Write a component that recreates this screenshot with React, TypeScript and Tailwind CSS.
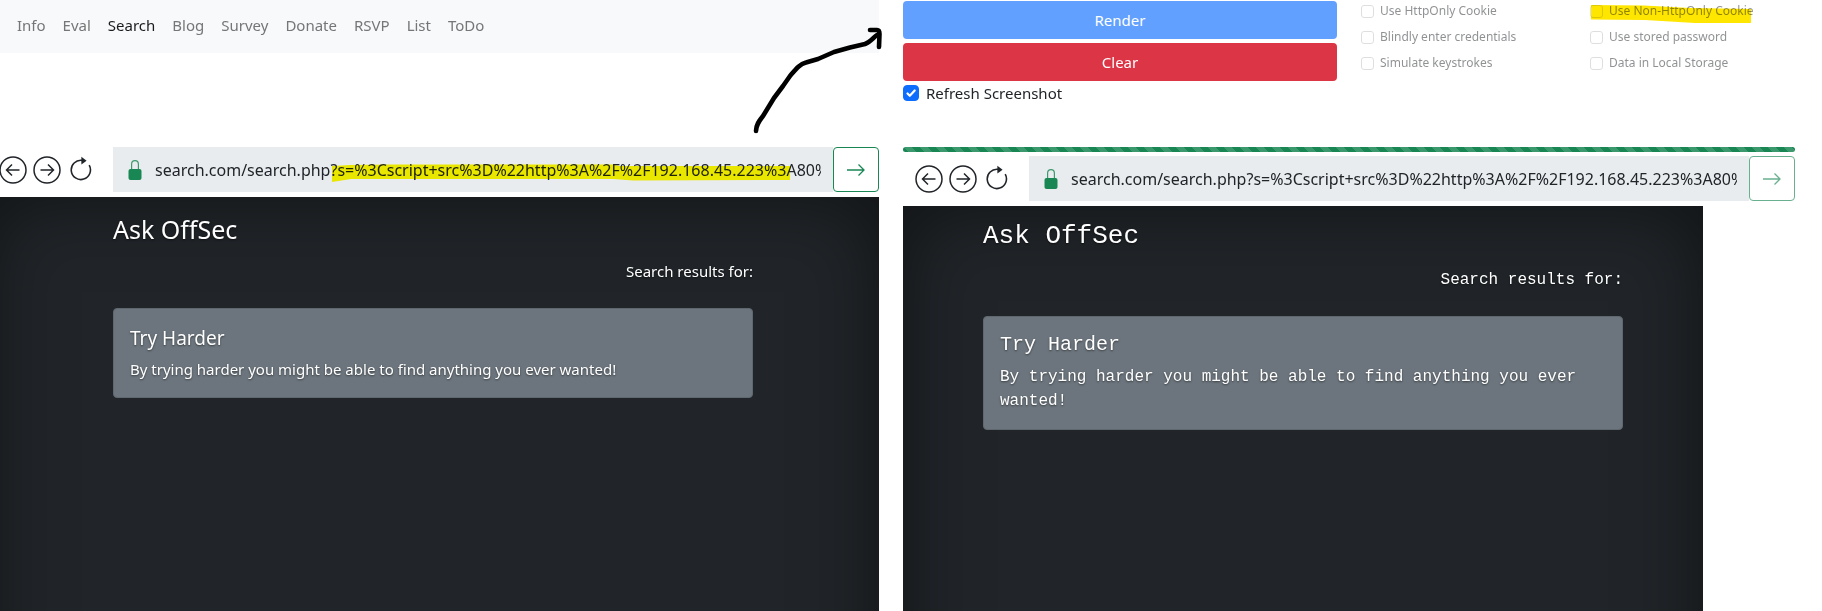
import React from "react";

const url =
  "search.com/search.php?s=%3Cscript+src%3D%22http%3A%2F%2F192.168.45.223%3A80%";

const navItems = ["Info", "Eval", "Search", "Blog", "Survey", "Donate", "RSVP", "List", "ToDo"];

const leftOptions = ["Use HttpOnly Cookie", "Blindly enter credentials", "Simulate keystrokes"];
const rightOptions = ["Use Non-HttpOnly Cookie", "Use stored password", "Data in Local Storage"];

function CircleArrow({ back }: { back?: boolean }) {
  return (
    <svg width="28" height="28" viewBox="0 0 28 28" fill="none" stroke="#212529" strokeWidth="1.5">
      <circle cx="14" cy="14" r="13" />
      {back ? <path d="M20.5 14H8M13 8.5L7.5 14l5.5 5.5" /> : <path d="M7.5 14H20M15 8.5l5.5 5.5-5.5 5.5" />}
    </svg>
  );
}

function ReloadIcon() {
  return (
    <svg width="22" height="28" viewBox="0 0 22 28" fill="none">
      <path d="M12 4.4A9.6 9.6 0 1 0 19.2 9.2" stroke="#212529" strokeWidth="1.6" />
      <path d="M11.4 0.800v7.800L16.600 4.800z" fill="#212529" />
    </svg>
  );
}

function LockIcon() {
  return (
    <svg width="14" height="22" viewBox="0 0 14 22" fill="none">
      <path d="M3.6 11V5.2a3.4 3.6 0 0 1 6.8 0V11" stroke="#3d9a6f" strokeWidth="1.2" />
      <rect x="0.5" y="10" width="13" height="11" rx="2" fill="#198754" />
    </svg>
  );
}

function AddressBar({ id, busy, children }: { id: string; busy?: boolean; children?: React.ReactNode }) {
  return (
    <div className="flex h-[45px] shrink-0">
      <div className="flex w-[126px] shrink-0 items-center gap-[6px] pl-3">
        <button type="button" aria-label="Back">
          <CircleArrow back />
        </button>
        <button type="button" aria-label="Forward">
          <CircleArrow />
        </button>
        <button type="button" aria-label="Reload" className="ml-[3px]">
          <ReloadIcon />
        </button>
      </div>
      <div className="relative flex min-w-0 flex-1 items-center bg-[#e9ecef] pl-[15px]">
        <LockIcon />
        <label htmlFor={id} className="sr-only">
          Address
        </label>
        <div className="min-w-0 flex-1 pr-3 pl-[13px]">
          <input
            id={id}
            type="text"
            readOnly
            defaultValue={url}
            className="block h-6 w-full bg-transparent text-base leading-6 text-[#212529] outline-none"
          />
        </div>
        {children}
      </div>
      <button
        type="button"
        aria-label="Go"
        disabled={busy}
        className="flex w-[46px] shrink-0 items-center justify-center rounded border border-[#198754] bg-white disabled:opacity-65"
      >
        <svg width="18" height="14" viewBox="0 0 18 14" fill="none" stroke="#198754" strokeWidth="1.3">
          <path d="M0 7h17M11.5 1.5L17 7l-5.500 5.500" />
        </svg>
      </button>
    </div>
  );
}

function Results({ mono }: { mono?: boolean }) {
  return (
    <section
      className={
        mono
          ? "mt-[5px] min-h-screen w-[800px] max-w-full shrink-0 bg-[#212529] pt-[14px] font-['Liberation_Mono',monospace] text-base leading-6 text-white shadow-[inset_0_0_80px_rgba(0,0,0,0.5)] [text-shadow:0_1px_2px_rgba(0,0,0,0.5)]"
          : "mt-[5px] min-h-screen shrink-0 bg-[#212529] pt-4 text-[15px] leading-6 text-white shadow-[inset_0_0_80px_rgba(0,0,0,0.5)] [text-shadow:0_1px_2px_rgba(0,0,0,0.5)]"
      }
    >
      <div className="mx-auto w-[640px] max-w-full">
        <h1 className={mono ? "text-[26px] leading-8" : "text-[25px] leading-8"}>Ask OffSec</h1>
        <p className={mono ? "mt-4 text-right" : "mt-[14px] text-right"}>Search results for:</p>
        <div className={mono ? "mt-6 rounded border border-[#5f676f] bg-[#6c757d] p-4" : "mt-[25px] rounded border border-[#5f676f] bg-[#6c757d] p-4"}>
          <h2 className={mono ? "mb-2 text-xl leading-6" : "mb-[6px] text-[19px] leading-[26px]"}>Try Harder</h2>
          <p>By trying harder you might be able to find anything you ever wanted!</p>
        </div>
      </div>
    </section>
  );
}

function OptionColumn({ options }: { options: string[] }) {
  return (
    <div className="flex flex-col gap-[6px]">
      {options.map((text) => (
        <label key={text} className="flex items-center gap-[6px] text-[12px] leading-5 text-[#212529] opacity-50">
          <input
            type="checkbox"
            disabled
            className="size-[13px] appearance-none rounded-[3px] border border-[#bfbfbf] bg-white"
          />
          {text}
        </label>
      ))}
    </div>
  );
}

export default function App() {
  return (
    <div className="relative h-screen overflow-hidden bg-white font-['Noto_Sans',sans-serif] text-[15px] text-[#212529]">
      <div className="-ml-[13px] grid h-full grid-cols-2 gap-6 pr-[27px]">
        <div className="flex min-w-0 flex-col">
          <nav className="mb-[94px] flex h-[53px] shrink-0 items-start gap-[17px] bg-[#f8f9fa] pt-[13px] pl-[30px]">
            {navItems.map((item) => (
              <a
                key={item}
                href="#"
                className={item === "Search" ? "leading-6 text-[#1a1b1c]" : "leading-6 text-[#757677]"}
              >
                {item}
              </a>
            ))}
          </nav>
          <AddressBar id="address-left">
            <svg
              className="pointer-events-none absolute top-[17px] left-[218px] mix-blend-multiply"
              width="460"
              height="19"
              viewBox="0 0 460 19"
            >
              <path
                d="M1 2L20 1L60 0.500L282 0.500L288 2L459 2L459 16L302 16.500L282 15L20 15L1 18Z"
                fill="#fff900"
              />
            </svg>
          </AddressBar>
          <Results />
        </div>

        <div className="flex min-w-0 flex-col">
          <div className="mb-[46px] grid shrink-0 grid-cols-2 gap-6 pt-px">
            <div className="flex flex-col gap-1">
              <button
                type="button"
                disabled
                className="h-[38px] rounded bg-[#0d6efd] text-white disabled:opacity-65"
              >
                Render
              </button>
              <button type="button" className="h-[38px] rounded bg-[#dc3545] text-white">
                Clear
              </button>
              <label className="flex h-4 items-center gap-[7px]">
                <span className="relative size-4">
                  <input
                    type="checkbox"
                    defaultChecked
                    className="peer block size-4 appearance-none rounded border border-[#bfbfbf] checked:border-[#0d6efd] checked:bg-[#0d6efd]"
                  />
                  <svg
                    className="pointer-events-none absolute inset-0 hidden peer-checked:block"
                    width="16"
                    height="16"
                    viewBox="0 0 16 16"
                    fill="none"
                  >
                    <path d="M4.500 8.500l2.300 2.300L11.700 5.500" stroke="#fff" strokeWidth="2.200" strokeLinecap="round" strokeLinejoin="round" />
                  </svg>
                </span>
                Refresh Screenshot
              </label>
            </div>
            <div className="relative grid grid-cols-2 items-start gap-6">
              <OptionColumn options={leftOptions} />
              <OptionColumn options={rightOptions} />
              <svg
                className="pointer-events-none absolute top-[3px] left-[229px] mix-blend-multiply"
                width="164"
                height="20"
                viewBox="0 0 164 20"
              >
                <path d="M1 1L54 1.500L100 4L161 5L161 19L105 19L55 16L1 15.500Z" fill="#ffe600" />
              </svg>
            </div>
          </div>
          <div
            role="progressbar"
            aria-label="Loading"
            className="mb-1 h-[5px] shrink-0 rounded-sm bg-[#198754] bg-[linear-gradient(45deg,rgba(255,255,255,.15)_25%,transparent_25%,transparent_50%,rgba(255,255,255,.15)_50%,rgba(255,255,255,.15)_75%,transparent_75%,transparent)] bg-[length:16px_16px]"
          />
          <AddressBar id="address-right" busy />
          <Results mono />
        </div>
      </div>

      <svg
        className="pointer-events-none absolute top-[24px] left-[750px]"
        width="136"
        height="112"
        viewBox="750 24 136 112"
        fill="none"
        stroke="#000"
        strokeWidth="4.600"
        strokeLinecap="round"
        strokeLinejoin="round"
      >
        <path d="M756 131C756 125 759 121 763 116L774 98L783 86L790 76C796 69 800 64 806 62.500L818 59L834 52L850 47.500L865 44C870 42 873 38 877 35" />
        <path d="M870 30H877Q879.500 30 879.500 34L879 47" />
      </svg>
    </div>
  );
}
